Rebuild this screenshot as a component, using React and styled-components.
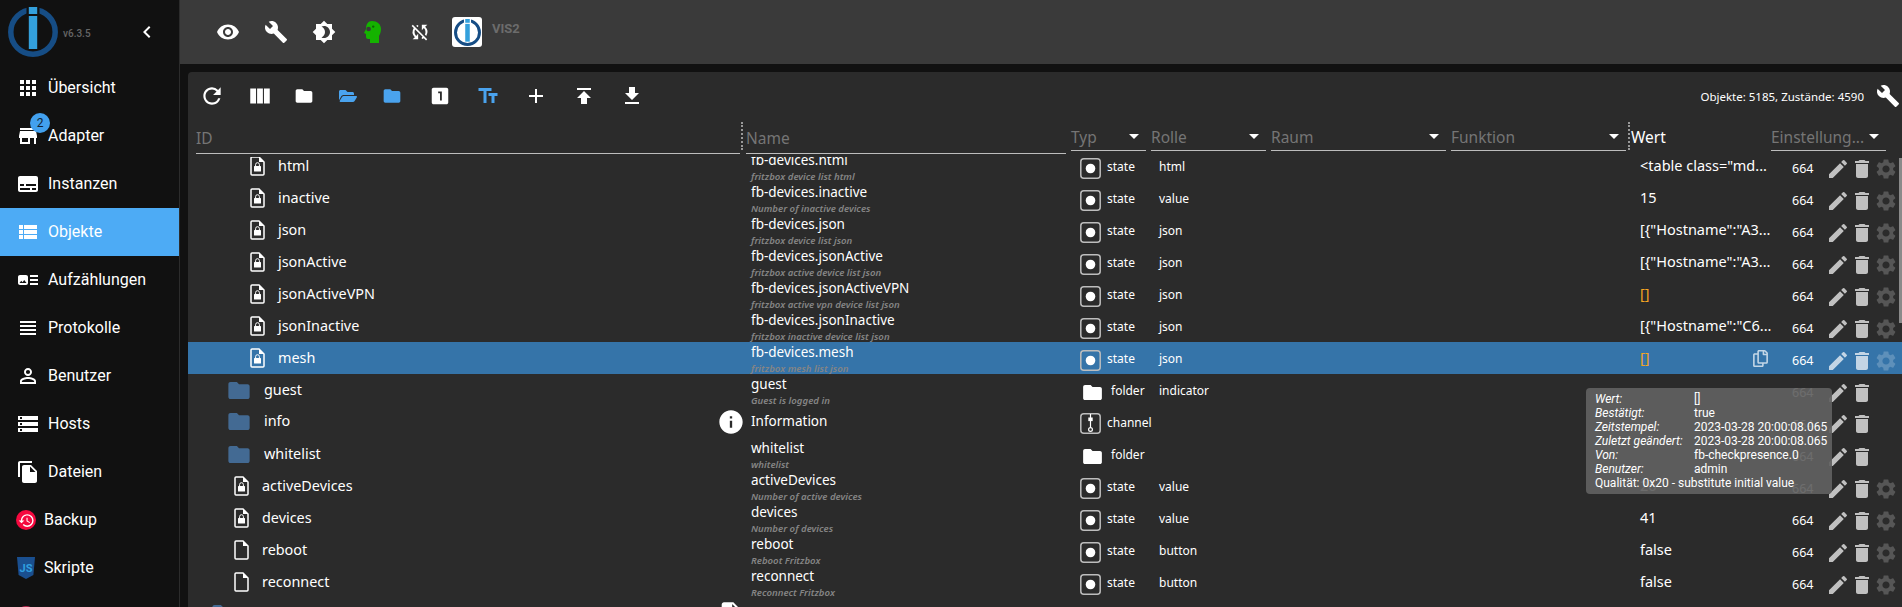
import React from 'react';
import styled, { createGlobalStyle } from 'styled-components';
import {
  MdApps, MdStore, MdSubtitles, MdViewList, MdArtTrack, MdViewHeadline, MdPersonOutline, MdStorage,
  MdFileCopy, MdHistory, MdChevronLeft, MdVisibility, MdBuild, MdBrightness4, MdSyncDisabled,
  MdRefresh, MdViewColumn, MdFolder, MdLooksOne, MdTextFields, MdAdd, MdPublish, MdGetApp, MdEdit,
  MdDelete, MdSettings, MdInfo, MdDescription,
} from 'react-icons/md';
import { FaFolderOpen, FaRegCopy } from 'react-icons/fa';

const Global = createGlobalStyle`
  html, body { margin: 0; padding: 0; height: 100%; background: #111; overflow: hidden; }
  * { box-sizing: border-box; }
`;

const UI = '"Noto Sans", "Open Sans", sans-serif';
const COLS = '553px 330px 80px 120px 180px 180px 140px 131px';

const Page = styled.div`
  display: flex; width: 1902px; height: 607px; overflow: hidden; background: #111; color: #fff;
`;
const Sidebar = styled.nav`
  width: 180px; flex: none; border-right: 1px solid #2c2c2c; background: #111;
  font-family: Roboto, sans-serif; overflow: hidden;
`;
const Brand = styled.div`
  height: 64px; position: relative; display: flex; align-items: center; padding-left: 8px;
`;
const Version = styled.span`
  font-size: 10px; font-weight: 500; color: #666; margin: 2px 0 0 5px;
`;
const Collapse = styled.span`
  display: flex; margin-left: 44px; color: #fff; font-size: 24px;
`;
const NavItem = styled.div`
  height: 48px; display: flex; align-items: center; gap: 8px; position: relative;
  padding-left: 16px; font-size: 16px; color: #fff;
  background: ${p => (p.$active ? '#4dabf5' : 'transparent')};
  svg { flex: none; }
`;
const NavLabel = styled.span`
  margin-bottom: 2px;
`;
const Badge = styled.span`
  position: absolute; left: 30px; top: 1px; width: 20px; height: 20px; border-radius: 50%;
  background: #42a0ee; color: #123; font-size: 12px; display: flex; align-items: center; justify-content: center;
`;
const RoundIcon = styled.span`
  width: 20px; height: 20px; border-radius: 50%; flex: none; color: #fff; font-size: 17px;
  background: ${p => p.$color}; display: flex; align-items: center; justify-content: center;
`;
const Main = styled.main`
  flex: 1; min-width: 0; display: flex; flex-direction: column;
`;
const TopBar = styled.header`
  height: 64px; flex: none; background: #3a3a3a; display: flex; align-items: center; padding-left: 24px;
`;
const TopButton = styled.span`
  width: 48px; height: 48px; display: flex; align-items: center; justify-content: center; color: #fff;
`;
const AppTile = styled.span`
  width: 30px; height: 30px; margin-left: 8px; background: #fff; border-radius: 3px;
  display: flex; align-items: center; justify-content: center;
`;
const TileLabel = styled.span`
  font: 700 13px Roboto, sans-serif; color: #6c6c6c; margin: -8px 0 0 10px;
`;
const Content = styled.div`
  flex: 1; min-height: 0; padding: 8px 0 0 8px;
`;
const Panel = styled.section`
  height: 100%; background: #2b2b2b; border-radius: 4px 0 0 0; position: relative;
  display: flex; flex-direction: column; font-family: ${UI};
`;
const Toolbar = styled.div`
  height: 48px; flex: none; display: flex; align-items: center;
`;
const ToolButton = styled.span`
  width: ${p => p.$w || 48}px; height: 48px; flex: none; display: flex; align-items: center; justify-content: center;
  color: ${p => p.$color || '#fff'};
  margin-left: ${p => p.$ml || 0}px;
`;
const Stats = styled.span`
  margin-left: auto; font-size: 11.5px; color: #fff; white-space: nowrap;
`;
const StatsIcon = styled.span`
  display: flex; color: #fff; margin: 0 2px 0 12px; font-size: 24px;
`;
const HeadRow = styled.div`
  height: 37px; flex: none; display: grid; grid-template-columns: ${COLS}; align-items: start;
`;
const HeadCell = styled.div`
  height: ${p => p.$h || 31}px; margin: 0 ${p => p.$mr ?? 5}px 0 ${p => p.$ml || 0}px;
  border-bottom: ${p => (p.$plain ? '0' : '1px solid #bdbdbd')};
  position: relative; display: flex; align-items: center; padding-top: 3px;
  font-size: 15.5px; color: ${p => (p.$plain ? '#fff' : '#757575')}; white-space: nowrap;
  ${p => p.$arrow && `
    &::after {
      content: ''; position: absolute; right: 7px; top: 14px; border: 5px solid transparent;
      border-top-color: #fff; border-bottom-width: 0;
    }
  `}
  ${p => p.$sep && `
    &::before {
      content: ''; position: absolute; right: ${p.$sep}px; top: 2px; height: 28px; border-left: 2px dotted #999;
    }
  `}
`;
const RowsArea = styled.div`
  flex: 1; min-height: 0; overflow: hidden; position: relative;
  &::after {
    content: ''; position: absolute; right: 0; top: 1px; width: 3px; height: 165px; background: #8a8a8a;
  }
`;
const Rows = styled.div`
  margin-top: -7px;
`;
const Row = styled.div`
  height: 32px; display: grid; grid-template-columns: ${COLS};
  background: ${p => (p.$selected ? '#3574a9' : 'transparent')};
  font-size: 14px; color: #fff;
`;
const IdCell = styled.div`
  display: flex; align-items: center; padding-left: ${p => p.$indent}px; padding-bottom: 1px; min-width: 0;
`;
const IdLabel = styled.span`
  margin: 0 0 2px ${p => p.$gap}px; font-size: 14.4px;
`;
const InfoBadge = styled.span`
  margin-left: auto; margin-right: -4px; display: flex; font-size: 28px; color: #fff;
`;
const NameCell = styled.div`
  display: flex; flex-direction: column; padding-left: 10px; white-space: nowrap;
  justify-content: ${p => (p.$solo ? 'center' : 'flex-start')};
`;
const NameText = styled.span`
  line-height: 18px; margin: ${p => (p.$solo ? '0 0 2px' : '1px 0 0')}; font-size: 13.5px;
`;
const NameSub = styled.span`
  line-height: 12px; margin-top: 2px; font-size: 9.6px; font-style: italic; font-weight: 600; color: #858585;
`;
const TypeCell = styled.div`
  display: flex; align-items: center; padding: 3px 0 0 9px; gap: ${p => (p.$wide ? 8 : 6)}px;
  font-size: 12px;
`;
const TypeLabel = styled.span`
  margin-bottom: 3px;
`;
const TypeIconBox = styled.span`
  display: flex; width: 21px; justify-content: center; margin-left: ${p => (p.$wide ? 2 : 0)}px;
`;
const RoleCell = styled.div`
  display: flex; align-items: center; padding: 0 0 1px 8px; font-size: 12px;
`;
const EmptyCell = styled.div``;
const ValueCell = styled.div`
  display: flex; align-items: center; justify-content: space-between; padding: 0 2px 3px 9px; font-size: 14.5px;
  color: ${p => (p.$orange ? '#f5a623' : '#fff')}; white-space: nowrap;
`;
const CopyIcon = styled.span`
  display: flex; margin-top: 3px; color: #c3d6e6; font-size: 17px;
`;
const SettingsCell = styled.div`
  display: flex; align-items: center; padding: 4px 4px 0 21px; font-size: 12.5px;
`;
const Mode = styled.span`
  width: 34px; flex: none;
`;
const ActionIcon = styled.span`
  width: 24px; display: flex; justify-content: center; color: #fff; opacity: ${p => (p.$dim ? 0.2 : 0.7)};
`;
const Tooltip = styled.div`
  position: absolute; right: 70px; top: 316px; width: 246px; height: 106px; padding: 4px 4px 0 9px;
  background: rgba(97, 97, 97, 0.92); border-radius: 4px; color: #fff;
  font: 12px/14px Roboto, sans-serif; z-index: 2;
`;
const TipRow = styled.div`
  display: grid; grid-template-columns: 99px 1fr; white-space: nowrap;
`;
const TipKey = styled.span`
  font-style: italic;
`;
const TipLine = styled.div`
  white-space: nowrap;
`;

const Logo = ({ size = 50, bg = '#111' }) => (
  <svg width={size} height={size} viewBox="0 0 50 50">
    <circle cx="25" cy="25" r="22.2" fill="none" stroke="#164d85" strokeWidth="5.5" />
    <rect x="18.5" y="0" width="13" height="8" fill={bg} />
    <rect x="20.8" y="0" width="8.4" height="7" fill="#33a0dc" />
    <rect x="20.8" y="9" width="8.4" height="33" fill="#33a0dc" />
  </svg>
);

const FOLDER_D = 'M10 4H4c-1.1 0-2 .9-2 2v12c0 1.1.9 2 2 2h16c1.1 0 2-.9 2-2V8c0-1.1-.9-2-2-2h-8l-2-2z';
const FolderShape = ({ w, h, color }) => (
  <svg width={w} height={h} viewBox="2 4 20 16"><path d={FOLDER_D} fill={color} /></svg>
);

const FileIcon = ({ lock }) => (
  <svg width="15" height="20" viewBox="0 0 15 20">
    <path d="M2 1h7l5 5v12a1 1 0 0 1-1 1H2a1 1 0 0 1-1-1V2a1 1 0 0 1 1-1z" fill="none" stroke="#fff" strokeWidth="1.5" />
    <path d="M9 1v5h5z" fill="#fff" />
    {lock && (
      <g>
        <rect x="4" y="10" width="7" height="5.6" rx=".5" fill="#fff" />
        <path d="M5.6 10V8.6a1.9 1.9 0 0 1 3.8 0V10" fill="none" stroke="#fff" strokeWidth="1" />
      </g>
    )}
  </svg>
);

const StateIcon = () => (
  <svg width="21" height="21" viewBox="0 0 21 21">
    <rect x=".8" y=".8" width="19.4" height="19.4" rx="3" fill="none" stroke="#bdbdbd" strokeWidth="1.5" />
    <circle cx="10.5" cy="10.5" r="4.8" fill="#fff" />
  </svg>
);
const ChannelIcon = () => (
  <svg width="21" height="21" viewBox="0 0 21 21">
    <rect x=".8" y=".8" width="19.4" height="19.4" rx="3" fill="none" stroke="#bdbdbd" strokeWidth="1.5" />
    <path d="M10.5 1v13" stroke="#fff" strokeWidth="1.2" />
    <rect x="8.3" y="4.5" width="4.4" height="3.6" fill="#fff" />
    <circle cx="10.5" cy="16.5" r="1.9" fill="none" stroke="#fff" strokeWidth="1.2" />
  </svg>
);

const Head = () => (
  <svg width="17" height="22" viewBox="0 0 17 22">
    <path d="M8 0c5 0 9 3 9 8 0 3-1 5-2 7v7H6v-4H4c-1 0-2-1-2-2v-3L0 12l2-4C2 3 4 0 8 0z" fill="#14b300" />
    <circle cx="4.6" cy="8" r="2.3" fill="#3a3a3a" />
    <circle cx="9.2" cy="5.6" r="1.2" fill="#0a6a00" />
  </svg>
);

const JsShield = () => (
  <svg width="20" height="24" viewBox="0 0 20 24">
    <path d="M1 1h18l-1.6 18L10 23l-7.4-4z" fill="#1a4f8f" />
    <text x="10" y="15.5" textAnchor="middle" fontFamily="Roboto, sans-serif" fontWeight="700" fontSize="11" fill="#2f9fe0">JS</text>
  </svg>
);

const nav = [
  { label: 'Übersicht', Icon: MdApps },
  { label: 'Adapter', Icon: MdStore, badge: 2 },
  { label: 'Instanzen', Icon: MdSubtitles },
  { label: 'Objekte', Icon: MdViewList, active: true },
  { label: 'Aufzählungen', Icon: MdArtTrack },
  { label: 'Protokolle', Icon: MdViewHeadline },
  { label: 'Benutzer', Icon: MdPersonOutline },
  { label: 'Hosts', Icon: MdStorage },
  { label: 'Dateien', Icon: MdFileCopy },
];

const HOST_A = '[{"Hostname":"A3...';
const rows = [
  { id: 'html', kind: 'lock', level: 3, name: 'fb-devices.html', sub: 'fritzbox device list html', type: 'state', role: 'html', value: '<table class="md...', gear: true },
  { id: 'inactive', kind: 'lock', level: 3, name: 'fb-devices.inactive', sub: 'Number of inactive devices', type: 'state', role: 'value', value: '15', gear: true },
  { id: 'json', kind: 'lock', level: 3, name: 'fb-devices.json', sub: 'fritzbox device list json', type: 'state', role: 'json', value: HOST_A, gear: true },
  { id: 'jsonActive', kind: 'lock', level: 3, name: 'fb-devices.jsonActive', sub: 'fritzbox active device list json', type: 'state', role: 'json', value: HOST_A, gear: true },
  { id: 'jsonActiveVPN', kind: 'lock', level: 3, name: 'fb-devices.jsonActiveVPN', sub: 'fritzbox active vpn device list json', type: 'state', role: 'json', value: '[]', orange: true, gear: true },
  { id: 'jsonInactive', kind: 'lock', level: 3, name: 'fb-devices.jsonInactive', sub: 'fritzbox inactive device list json', type: 'state', role: 'json', value: '[{"Hostname":"C6...', gear: true },
  { id: 'mesh', kind: 'lock', level: 3, name: 'fb-devices.mesh', sub: 'fritzbox mesh list json', type: 'state', role: 'json', value: '[]', orange: true, gear: true, selected: true },
  { id: 'guest', kind: 'folder', level: 2, name: 'guest', sub: 'Guest is logged in', type: 'folder', role: 'indicator' },
  { id: 'info', kind: 'folder', level: 2, name: 'Information', type: 'channel', info: true },
  { id: 'whitelist', kind: 'folder', level: 2, name: 'whitelist', sub: 'whitelist', type: 'folder' },
  { id: 'activeDevices', kind: 'lock', level: 2, name: 'activeDevices', sub: 'Number of active devices', type: 'state', role: 'value', value: '26', gear: true },
  { id: 'devices', kind: 'lock', level: 2, name: 'devices', sub: 'Number of devices', type: 'state', role: 'value', value: '41', gear: true },
  { id: 'reboot', kind: 'file', level: 2, name: 'reboot', sub: 'Reboot Fritzbox', type: 'state', role: 'button', value: 'false', gear: true },
  { id: 'reconnect', kind: 'file', level: 2, name: 'reconnect', sub: 'Reconnect Fritzbox', type: 'state', role: 'button', value: 'false', gear: true },
];

const tipRows = [
  ['Wert:', '[]'],
  ['Bestätigt:', 'true'],
  ['Zeitstempel:', '2023-03-28 20:00:08.065'],
  ['Zuletzt geändert:', '2023-03-28 20:00:08.065'],
  ['Von:', 'fb-checkpresence.0'],
  ['Benutzer:', 'admin'],
];

const typeIcon = t => {
  if (t === 'folder') return <FolderShape w={19} h={15} color="#fff" />;
  if (t === 'channel') return <ChannelIcon />;
  return <StateIcon />;
};

const ObjectRow = ({ r }) => {
  const indent = r.kind === 'folder' ? 40 : r.level === 3 ? 62 : 46;
  const gap = r.kind === 'folder' ? 14 : 13;
  return (
    <Row $selected={r.selected}>
      <IdCell $indent={indent}>
        {r.kind === 'folder' ? <FolderShape w={22} h={17} color="#436a93" /> : <FileIcon lock={r.kind === 'lock'} />}
        <IdLabel $gap={gap}>{r.id}</IdLabel>
        {r.info && <InfoBadge><MdInfo /></InfoBadge>}
      </IdCell>
      <NameCell $solo={!r.sub}>
        <NameText $solo={!r.sub}>{r.name}</NameText>
        {r.sub && <NameSub>{r.sub}</NameSub>}
      </NameCell>
      <TypeCell $wide={r.type === 'folder'}>
        <TypeIconBox $wide={r.type === 'folder'}>{typeIcon(r.type)}</TypeIconBox>
        <TypeLabel>{r.type}</TypeLabel>
      </TypeCell>
      <RoleCell>{r.role}</RoleCell>
      <EmptyCell />
      <EmptyCell />
      <ValueCell $orange={r.orange}>
        <span>{r.value}</span>
        {r.selected && <CopyIcon><FaRegCopy /></CopyIcon>}
      </ValueCell>
      <SettingsCell>
        <Mode>664</Mode>
        <ActionIcon><MdEdit size={24} /></ActionIcon>
        <ActionIcon><MdDelete size={24} /></ActionIcon>
        {r.gear && <ActionIcon $dim><MdSettings size={24} /></ActionIcon>}
      </SettingsCell>
    </Row>
  );
};

/* The next tree row only shows the tops of its icons at the bottom edge of the window. */
const PartialRow = () => (
  <Row>
    <IdCell $indent={24}><FolderShape w={22} h={17} color="#436a93" /><InfoBadge><MdDescription /></InfoBadge></IdCell>
    <EmptyCell />
    <TypeCell $wide><TypeIconBox $wide><FolderShape w={19} h={15} color="#fff" /></TypeIconBox></TypeCell>
  </Row>
);

export default function App() {
  return (
    <Page>
      <Global />
      <Sidebar>
        <Brand>
          <Logo />
          <Version>v6.3.5</Version>
          <Collapse><MdChevronLeft /></Collapse>
        </Brand>
        {nav.map(({ label, Icon, active, badge }) => (
          <NavItem key={label} $active={active}>
            <Icon size={24} />
            <NavLabel>{label}</NavLabel>
            {badge && <Badge>{badge}</Badge>}
          </NavItem>
        ))}
        <NavItem><RoundIcon $color="#f5093f"><MdHistory /></RoundIcon><NavLabel>Backup</NavLabel></NavItem>
        <NavItem><JsShield /><NavLabel>Skripte</NavLabel></NavItem>
        <NavItem><RoundIcon $color="#b8274f" /></NavItem>
      </Sidebar>
      <Main>
        <TopBar>
          <TopButton><MdVisibility size={24} /></TopButton>
          <TopButton><MdBuild size={24} /></TopButton>
          <TopButton><MdBrightness4 size={24} /></TopButton>
          <TopButton><Head /></TopButton>
          <TopButton><MdSyncDisabled size={22} /></TopButton>
          <AppTile><Logo size={27} bg="#fff" /></AppTile>
          <TileLabel>VIS2</TileLabel>
        </TopBar>
        <Content>
          <Panel>
            <Toolbar>
              <ToolButton><MdRefresh size={26} /></ToolButton>
              <ToolButton><MdViewColumn size={26} /></ToolButton>
              <ToolButton $w={44} $ml={-2}><MdFolder size={20} /></ToolButton>
              <ToolButton $w={44} $color="#4aa3ee"><FaFolderOpen size={18} /></ToolButton>
              <ToolButton $w={44} $color="#4aa3ee"><MdFolder size={20} /></ToolButton>
              <ToolButton $ml={2}><MdLooksOne size={22} /></ToolButton>
              <ToolButton $color="#4aa3ee"><MdTextFields size={24} /></ToolButton>
              <ToolButton><MdAdd size={24} /></ToolButton>
              <ToolButton><MdPublish size={24} /></ToolButton>
              <ToolButton><MdGetApp size={24} /></ToolButton>
              <Stats>Objekte: 5185, Zustände: 4590</Stats>
              <StatsIcon><MdBuild /></StatsIcon>
            </Toolbar>
            <HeadRow>
              <HeadCell $h={34} $ml={8} $mr={1} $sep={-3}>ID</HeadCell>
              <HeadCell $h={34} $ml={5}>Name</HeadCell>
              <HeadCell $arrow>Typ</HeadCell>
              <HeadCell $arrow>Rolle</HeadCell>
              <HeadCell $arrow>Raum</HeadCell>
              <HeadCell $arrow $sep={-4}>Funktion</HeadCell>
              <HeadCell $plain>Wert</HeadCell>
              <HeadCell $arrow $mr={16}>Einstellung...</HeadCell>
            </HeadRow>
            <RowsArea>
              <Rows>
                {rows.map(r => <ObjectRow key={r.id} r={r} />)}
                <PartialRow />
              </Rows>
            </RowsArea>
            <Tooltip>
              {tipRows.map(([k, v]) => (
                <TipRow key={k}><TipKey>{k}</TipKey><span>{v}</span></TipRow>
              ))}
              <TipLine>Qualität: 0x20 - substitute initial value</TipLine>
            </Tooltip>
          </Panel>
        </Content>
      </Main>
    </Page>
  );
}
